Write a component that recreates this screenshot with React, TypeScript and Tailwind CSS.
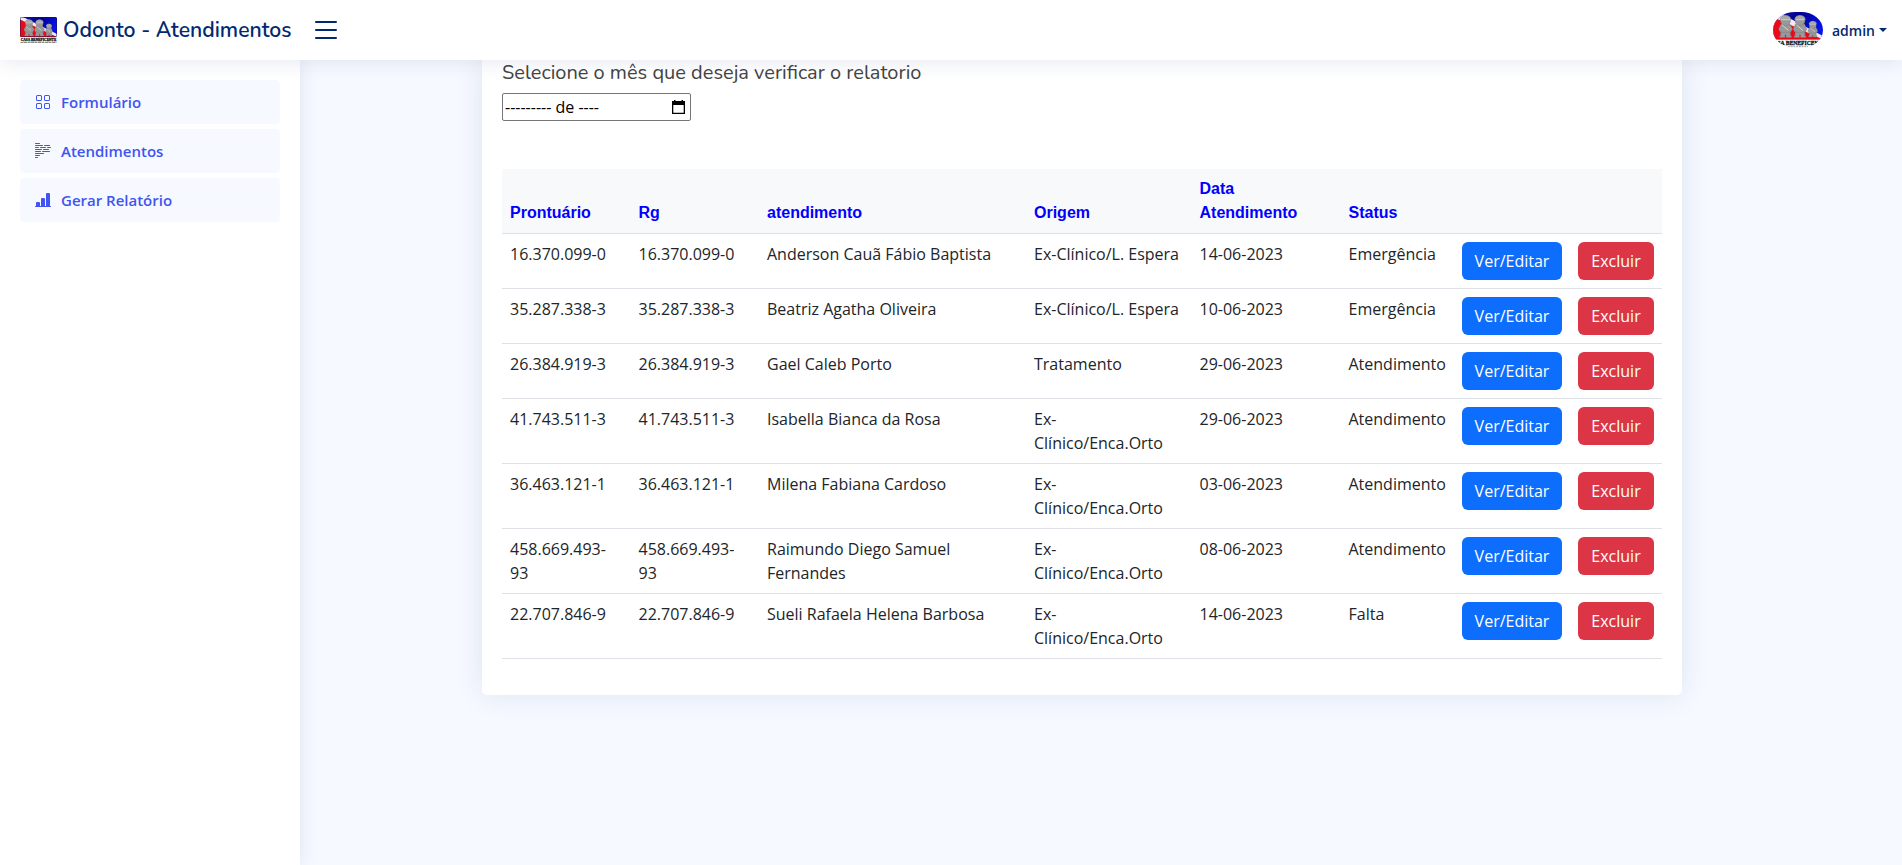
import React from 'react';
import { BsGrid, BsBodyText, BsBarChartLineFill } from 'react-icons/bs';

type Row = { id: string; name: string; origin: string; date: string; status: string };

const rows: Row[] = [
  { id: '16.370.099-0', name: 'Anderson Cauã Fábio Baptista', origin: 'Ex-Clínico/L. Espera', date: '14-06-2023', status: 'Emergência' },
  { id: '35.287.338-3', name: 'Beatriz Agatha Oliveira', origin: 'Ex-Clínico/L. Espera', date: '10-06-2023', status: 'Emergência' },
  { id: '26.384.919-3', name: 'Gael Caleb Porto', origin: 'Tratamento', date: '29-06-2023', status: 'Atendimento' },
  { id: '41.743.511-3', name: 'Isabella Bianca da Rosa', origin: 'Ex-\nClínico/Enca.Orto', date: '29-06-2023', status: 'Atendimento' },
  { id: '36.463.121-1', name: 'Milena Fabiana Cardoso', origin: 'Ex-\nClínico/Enca.Orto', date: '03-06-2023', status: 'Atendimento' },
  { id: '458.669.493-\n93', name: 'Raimundo Diego Samuel\nFernandes', origin: 'Ex-\nClínico/Enca.Orto', date: '08-06-2023', status: 'Atendimento' },
  { id: '22.707.846-9', name: 'Sueli Rafaela Helena Barbosa', origin: 'Ex-\nClínico/Enca.Orto', date: '14-06-2023', status: 'Falta' },
];

const menu = [
  { label: 'Formulário', Icon: BsGrid },
  { label: 'Atendimentos', Icon: BsBodyText },
  { label: 'Gerar Relatório', Icon: BsBarChartLineFill },
];

function Figure({ x, y, s }: { x: number; y: number; s: number }) {
  return (
    <g transform={`translate(${x} ${y}) scale(${s})`} fill="#999" stroke="#77777c" strokeWidth="0.4">
      <path d="M-5 15.500h10v5.500h1v1.800h-5.500v-2.800h-1v2.800H-6V21h1z" />
      <path d="M-4.500 9h9l2.500 5-1.500 3.200-1.500-.6v1h-8v-1l-1.500.6L-7 14z" />
      <circle cx="0" cy="5.600" r="5" />
      <path d="M-5.600 4.400C-5-1.300 5-1.300 5.600 4.400z" fill="#a8a8a8" />
      <path d="M-4.600 4.600h9.200M-3.500 10l6.500 5.500" stroke="#dcdcdc" strokeWidth="0.900" />
    </g>
  );
}

function Emblem({ className, round }: { className: string; round?: boolean }) {
  return (
    <svg className={className} viewBox={round ? '0 0 50 36' : '0 0 37 26'} preserveAspectRatio="none">
      <defs>
        <linearGradient id={round ? 'blueR' : 'blueL'} x1="0" y1="0" x2="1" y2="0.4">
          <stop offset="0" stopColor="#1a1ab0" />
          <stop offset="0.5" stopColor="#000090" />
          <stop offset="1" stopColor="#0713e8" />
        </linearGradient>
        <clipPath id="oval">
          <rect width="50" height="36" rx="22" ry="18" />
        </clipPath>
        <clipPath id="plate">
          <rect width="37" height="20" rx="1.5" />
        </clipPath>
      </defs>
      {round ? (
        <g clipPath="url(#oval)">
          <rect width="50" height="36" fill="#fff" />
          <rect width="50" height="27.5" fill="url(#blueR)" />
          <path d="M0 0h5L50 24v3.500H0z" fill="#f3e8f6" />
          <path d="M0 5l50 22.500H0z" fill="#ea0a1a" />
          <Figure x={12.500} y={3.200} s={0.98} />
          <Figure x={27} y={3.200} s={0.98} />
          <Figure x={39.800} y={9} s={0.7} />
          <text x="25" y="33" textAnchor="middle" textLength="41" lengthAdjust="spacingAndGlyphs" className="font-['Liberation_Serif',serif] text-[6px] font-bold" fill="#111" stroke="#111" strokeWidth="0.300">SA BENEFICEN</text>
          <path d="M15 34.700h20" stroke="#777" strokeWidth="0.700" strokeDasharray="2 0.700" />
        </g>
      ) : (
        <g>
          <g clipPath="url(#plate)">
            <rect width="37" height="20" fill="url(#blueL)" />
            <path d="M0 0h3l34 17v3H0z" fill="#f3e8f6" />
            <path d="M0 2.500l37 17.500H0z" fill="#ea0a1a" />
            <Figure x={9} y={2.500} s={0.72} />
            <Figure x={19.500} y={2.500} s={0.72} />
            <Figure x={29} y={6.800} s={0.52} />
            <rect x="0.300" y="0.300" width="36.400" height="19.400" rx="1.300" fill="none" stroke="#15154a" strokeWidth="0.600" />
          </g>
          <text x="18.500" y="24" textAnchor="middle" textLength="35.500" lengthAdjust="spacingAndGlyphs" className="font-['Liberation_Serif',serif] text-[4px] font-bold leading-none" fill="#111" stroke="#111" strokeWidth="0.300">CASA BENEFICENTE</text>
          <path d="M.5 25.400h36" stroke="#444" strokeWidth="0.700" strokeDasharray="3 0.500" />
        </g>
      )}
    </svg>
  );
}

function Header() {
  return (
    <header className="relative z-20 flex h-[60px] shrink-0 items-center bg-white pl-5 pr-[15px] shadow-[0_2px_20px_rgba(1,41,112,0.1)]">
      <Emblem className="h-[26px] w-[37px] overflow-visible" />
      <span className="ml-[6px] w-[230px] whitespace-nowrap font-['Nunito','Noto_Sans',sans-serif] text-[21.150px] font-semibold leading-[26px] text-[#012970]">Odonto - Atendimentos</span>
      <svg className="ml-[17px] h-8 w-8" viewBox="0 0 16 16" fill="#012970">
        <path fillRule="evenodd" d="M2.500 12a.5.5 0 0 1 .5-.5h10a.5.5 0 0 1 0 1H3a.5.5 0 0 1-.5-.5m0-4a.5.5 0 0 1 .5-.5h10a.5.5 0 0 1 0 1H3a.5.5 0 0 1-.5-.5m0-4a.5.5 0 0 1 .5-.5h10a.5.5 0 0 1 0 1H3a.5.5 0 0 1-.5-.5" />
      </svg>
      <div className="ml-auto flex items-center">
        <Emblem round className="h-9 w-[50px]" />
        <span className="ml-[9px] text-sm font-semibold leading-[21px] text-[#012970]">admin</span>
        <span className="ml-1 border-x-[4px] border-t-[4px] border-x-transparent border-t-[#012970]" />
      </div>
    </header>
  );
}

function Sidebar() {
  return (
    <aside className="z-10 w-[300px] shrink-0 bg-white p-5 shadow-[0_0_20px_rgba(1,41,112,0.1)]">
      <ul className="flex flex-col gap-[5px]">
        {menu.map(({ label, Icon }) => (
          <li key={label} className="flex h-11 items-center rounded bg-[#f6f9ff] px-[15px] text-[15px] font-semibold text-[#4154f1]">
            <Icon className="mr-[10px] size-4" />
            {label}
          </li>
        ))}
      </ul>
    </aside>
  );
}

function Report() {
  const th = 'px-2 py-2 align-bottom font-bold';
  const td = 'px-2 py-2';
  return (
    <section className="h-[635px] w-[1200px] rounded-b-[5px] bg-white px-5 shadow-[0_0_30px_rgba(1,41,112,0.1)]">
      <h5 className="h-[33px] w-fit whitespace-nowrap font-['Nunito','Noto_Sans',sans-serif] text-[20px] leading-[25px] text-[#444]">Selecione o mês que deseja verificar o relatorio</h5>
      <div className="flex h-7 w-[189px] items-center justify-between rounded-[2px] border border-[#767676] px-[2px] text-base text-black">
        <span>--------- de ----</span>
        <svg className="mr-[3px] h-[14px] w-[13px]" viewBox="0 0 13 14">
          <path d="M0 1h2V0h1.500v1h6V0H11v1h2v13H0zM1.300 5v7.700h10.400V5z" fillRule="evenodd" />
        </svg>
      </div>
      <table className="mt-12 w-[1160px] table-fixed border-separate border-spacing-0 text-left text-base leading-6 text-[#212529] [&_td]:border-b [&_td]:border-[#dee2e6] [&_th]:border-b [&_th]:border-[#dee2e6]">
        <colgroup>
          <col className="w-[128.500px]" />
          <col className="w-[128.500px]" />
          <col className="w-[267px]" />
          <col className="w-[165.500px]" />
          <col className="w-[149px]" />
          <col className="w-[113.500px]" />
          <col className="w-[116px]" />
          <col className="w-[92px]" />
        </colgroup>
        <thead>
          <tr className="bg-[#f8f9fa] font-['Liberation_Sans',Arial,sans-serif] text-[#0000ff]">
            <th className={th}>Prontuário</th>
            <th className={th}>Rg</th>
            <th className={th}>atendimento</th>
            <th className={th}>Origem</th>
            <th className={th}>Data<br />Atendimento</th>
            <th className={th}>Status</th>
            <th />
            <th />
          </tr>
        </thead>
        <tbody>
          {rows.map((r) => (
            <tr key={r.name} className="whitespace-pre align-top">
              <td className={td}>{r.id}</td>
              <td className={td}>{r.id}</td>
              <td className={td}>{r.name}</td>
              <td className={td}>{r.origin}</td>
              <td className={td}>{r.date}</td>
              <td className={td}>{r.status}</td>
              <td className={td}>
                <button className="block h-[38px] w-[100px] rounded-md bg-[#0d6efd] text-white">Ver/Editar</button>
              </td>
              <td className={td}>
                <button className="block h-[38px] w-[76px] rounded-md bg-[#dc3545] text-white">Excluir</button>
              </td>
            </tr>
          ))}
        </tbody>
      </table>
    </section>
  );
}

export default function App() {
  return (
    <div className="flex h-[865px] w-full flex-col overflow-hidden bg-[#f6f9ff] font-['Open_Sans',sans-serif] text-[#444]">
      <Header />
      <div className="flex min-h-0 flex-1">
        <Sidebar />
        <main className="flex-1 pl-[182px]">
          <Report />
        </main>
      </div>
    </div>
  );
}
